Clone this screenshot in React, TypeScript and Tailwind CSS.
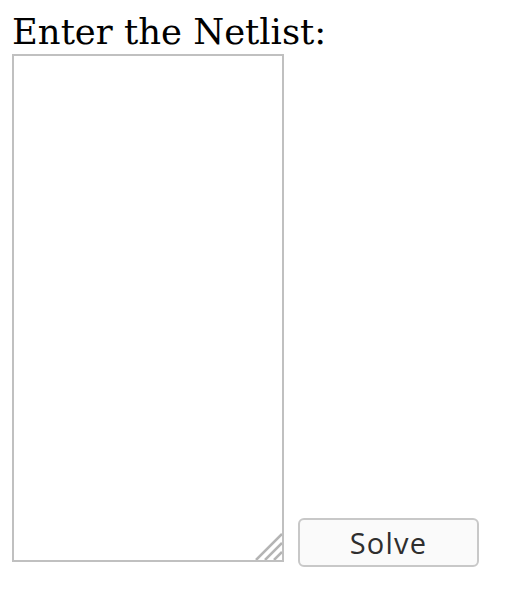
import React from "react";

export default function App() {
  return (
    <div className="bg-white w-[520px] h-[592px] pl-[12px] pt-[10px]">
      <div
        className="text-[35.4px] leading-[44px] text-black"
        style={{ fontFamily: '"DejaVu Serif", serif' }}
      >
        Enter the Netlist:
      </div>
      <div className="flex items-end">
        <div className="relative">
          <textarea className="block w-[272px] h-[508px] border-2 border-[#c0c0c0] bg-white resize-none outline-none" />
          <svg
            className="absolute right-[2px] bottom-[2px]"
            width="28"
            height="28"
            viewBox="0 0 28 28"
          >
            <line x1="2" y1="28" x2="28" y2="2" stroke="#b4b4b4" strokeWidth="2.5" />
            <line x1="11" y1="28" x2="28" y2="11" stroke="#b4b4b4" strokeWidth="2.5" />
            <line x1="20" y1="28" x2="28" y2="20" stroke="#b4b4b4" strokeWidth="2.5" />
          </svg>
        </div>
        <button
          className="ml-[14px] mb-[-5px] w-[181px] h-[49px] border-2 border-[#c8c8c8] rounded-[6px] bg-[#fafafa] text-[#2e2e2e] text-[29px] font-medium leading-none tracking-[1.2px]"
          style={{ fontFamily: '"Open Sans", sans-serif' }}
        >
          Solve
        </button>
      </div>
    </div>
  );
}
